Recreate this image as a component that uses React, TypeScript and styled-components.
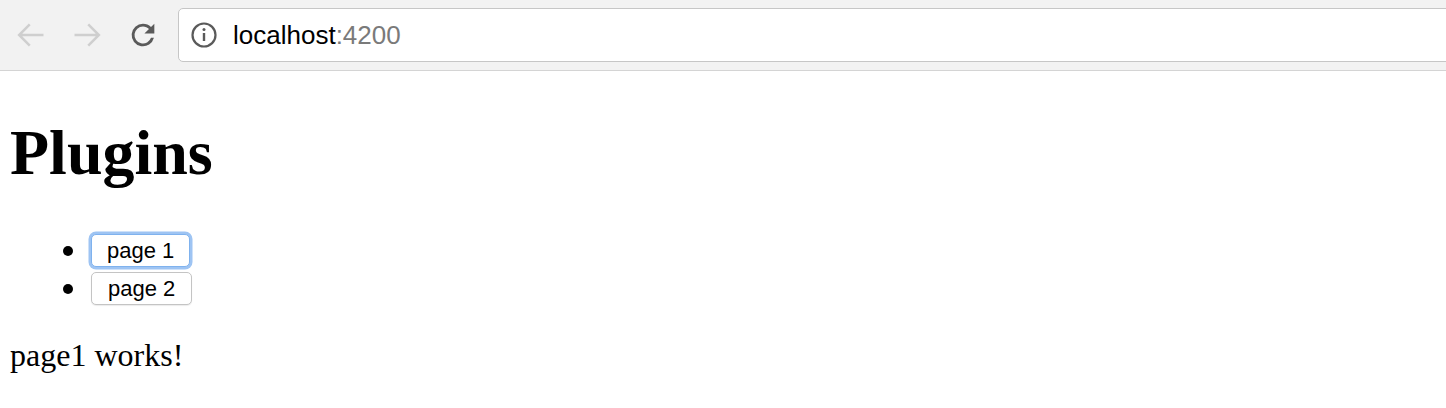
import React from 'react'
import styled, { createGlobalStyle } from 'styled-components'

const GlobalStyle = createGlobalStyle`
  html, body {
    margin: 0;
    padding: 0;
    background: #ffffff;
  }
`

const Toolbar = styled.div`
  height: 71px;
  background: #f2f2f2;
  border-bottom: 1px solid #d4d4d4;
  display: flex;
  align-items: center;
  padding-left: 14px;
  box-sizing: border-box;
  overflow: hidden;
`

const NavButton = styled.div`
  width: 34px;
  height: 34px;
  display: flex;
  align-items: center;
  justify-content: center;
  margin-right: 22px;
`

const Omnibox = styled.div`
  flex: 1;
  height: 54px;
  margin-left: -4px;
  margin-right: -10px;
  background: #ffffff;
  border: 1px solid #c6c6c6;
  border-radius: 5px;
  display: flex;
  align-items: center;
  padding-left: 11px;
  box-sizing: border-box;
`

const Url = styled.span`
  font-family: 'Liberation Sans', Arial, sans-serif;
  font-size: 26px;
  color: #000000;
  margin-left: 15px;
`

const Port = styled.span`
  color: #7a7a7a;
`

const Page = styled.main`
  padding: 0 10px;
  font-family: 'Liberation Serif', 'Times New Roman', serif;
  color: #000000;
`

const Title = styled.h1`
  font-size: 64px;
  font-weight: 700;
  margin: 45px 0 0;
  line-height: 74px;
`

const Menu = styled.ul`
  margin: 41px 0 0;
  padding-left: 80px;
  font-size: 32px;
  list-style: disc;
`

const Item = styled.li`
  height: 38px;
  line-height: 38px;
  padding-left: 1px;

  &::marker {
    font-size: 34px;
  }
`

const PageButton = styled.button<{ $focused?: boolean }>`
  font-family: 'Liberation Sans', Arial, sans-serif;
  font-size: 22px;
  line-height: 29px;
  height: 33px;
  padding: 0 ${p => (p.$focused ? 15 : 16)}px;
  margin: 0 0 7px;
  background: #ffffff;
  color: #000000;
  border: 1px solid ${p => (p.$focused ? '#7fb2ee' : '#c4c4c4')};
  border-radius: 5px;
  box-shadow: ${p => (p.$focused ? '0 0 0 2.5px #9ec4f3' : '0 1px 1px rgba(0,0,0,0.08)')};
  vertical-align: middle;
`

const Output = styled.p`
  font-size: 32px;
  margin: 30px 0 0;
  line-height: 37px;
`

const Arrow = ({ dir, color }: { dir: 'left' | 'right'; color: string }) => (
  <svg width="30" height="30" viewBox="0 0 24 24" fill="none">
    <g transform={dir === 'right' ? 'rotate(180 12 12)' : undefined}>
      <path d="M22 12H2.5M11 3.5L2.5 12l8.5 8.5" stroke={color} strokeWidth="2" strokeLinecap="butt" />
    </g>
  </svg>
)

const Reload = () => (
  <svg width="36" height="36" viewBox="0 0 24 24">
    <path
      d="M17.65 6.35A7.96 7.96 0 0 0 12 4a8 8 0 1 0 7.73 10h-2.08A6 6 0 1 1 12 6c1.66 0 3.14.69 4.22 1.78L13 11h7V4l-2.35 2.35z"
      fill="#5a5a5a"
    />
  </svg>
)

const Info = () => (
  <svg width="28" height="28" viewBox="0 0 28 28">
    <circle cx="14" cy="14" r="11.5" fill="none" stroke="#5a5a5a" strokeWidth="2.2" />
    <rect x="12.8" y="12" width="2.4" height="8" fill="#5a5a5a" />
    <circle cx="14" cy="8.6" r="1.5" fill="#5a5a5a" />
  </svg>
)

export default function App() {
  return (
    <>
      <GlobalStyle />
      <Toolbar>
        <NavButton>
          <Arrow dir="left" color="#cfcfcf" />
        </NavButton>
        <NavButton>
          <Arrow dir="right" color="#cfcfcf" />
        </NavButton>
        <NavButton>
          <Reload />
        </NavButton>
        <Omnibox>
          <Info />
          <Url>
            localhost<Port>:4200</Port>
          </Url>
        </Omnibox>
      </Toolbar>
      <Page>
        <Title>Plugins</Title>
        <Menu>
          <Item>
            <PageButton $focused>page 1</PageButton>
          </Item>
          <Item>
            <PageButton>page 2</PageButton>
          </Item>
        </Menu>
        <Output>page1 works!</Output>
      </Page>
    </>
  )
}
